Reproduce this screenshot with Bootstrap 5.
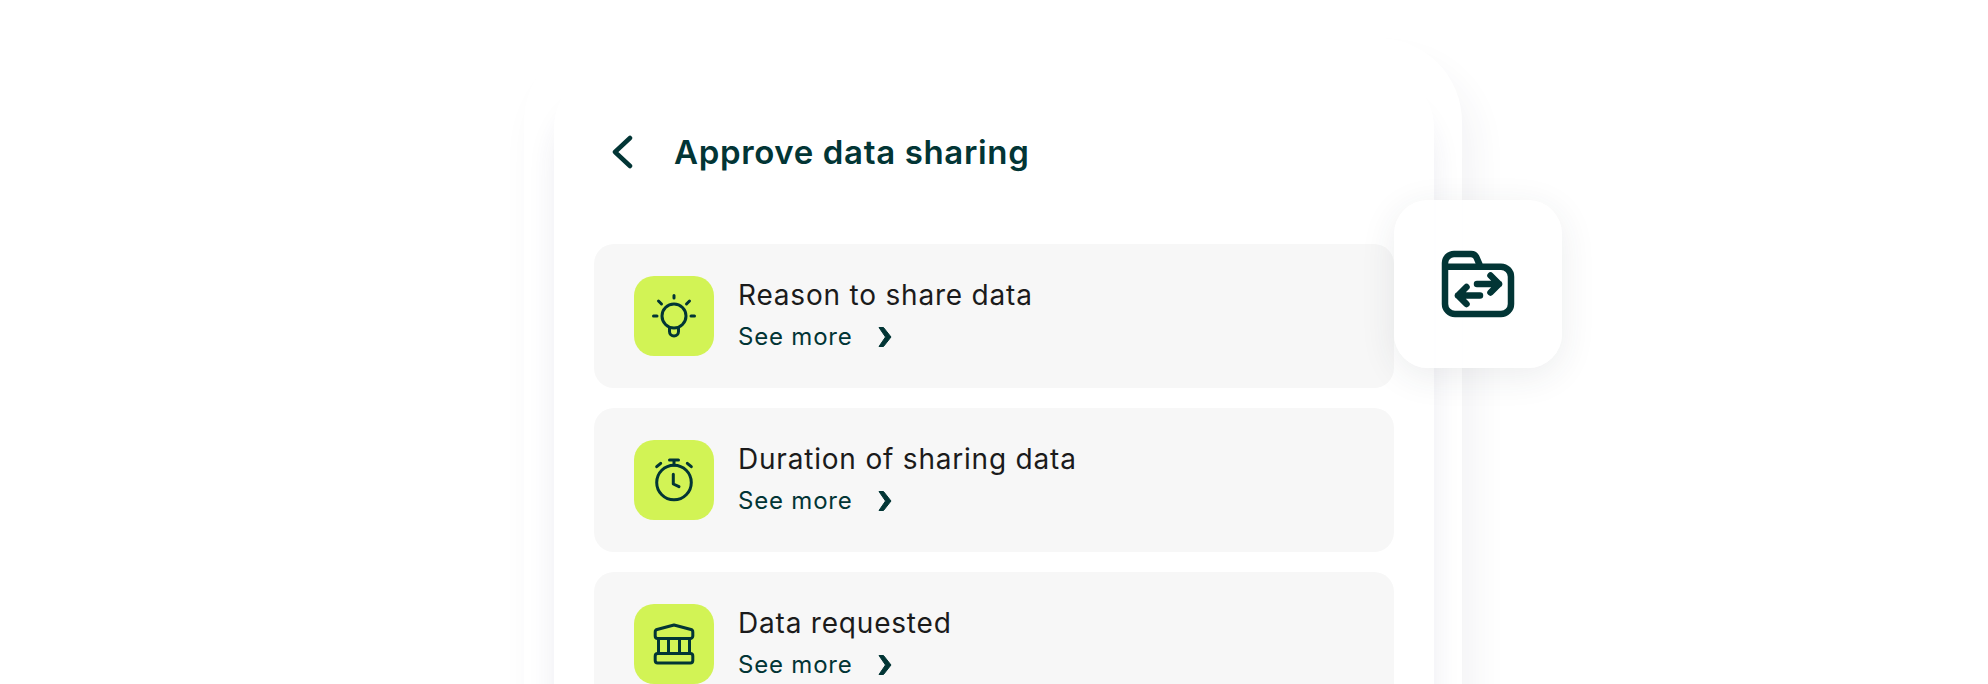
<!DOCTYPE html>
<html lang="en">
<head>
    <meta charset="UTF-8">
    <meta name="viewport" content="width=device-width, initial-scale=1.0">
    <title>Approve data sharing</title>
    <link rel="stylesheet" href="https://cdn.jsdelivr.net/npm/bootstrap@5.3.0/dist/css/bootstrap.min.css">
    <style>
        html, body {
            height: 684px;
            overflow: hidden;
            background: #fff;
        }
        body {
            font-family: Inter, "Noto Sans", sans-serif;
            color: #023535;
        }
        .stage {
            height: 684px;
            overflow: hidden;
            padding: 38px 0 0 524px;
        }
        .phone-ring {
            position: relative;
            width: 938px;
            height: 760px;
            padding: 28px 28px 0 30px;
            background: #fff;
            border-radius: 84px 84px 0 0;
            box-shadow: 12px 26px 36px rgba(50, 50, 90, 0.06);
        }
        .phone-screen {
            height: 100%;
            padding: 0 40px;
            background: #fff;
            border-radius: 62px 62px 0 0;
            box-shadow: 0 34px 28px rgba(50, 50, 100, 0.085);
        }
        .screen-head {
            height: 178px;
            padding: 0 0 6px 18px;
            gap: 40px;
        }
        .screen-head h1 {
            font-size: 33px;
            font-weight: 600;
            letter-spacing: 0.65px;
            margin: 0;
            padding-top: 1px;
            color: #023535;
        }
        .share-row {
            height: 144px;
            padding: 0 40px;
            gap: 24px;
            background: #f7f7f7;
            border-radius: 20px;
        }
        .row-stack {
            gap: 20px;
        }
        .row-text {
            padding-bottom: 2px;
        }
        .tile-lime {
            width: 80px;
            height: 80px;
            flex: none;
            background: #d2f355;
            border-radius: 20px;
        }
        .row-title {
            font-size: 28px;
            line-height: 38px;
            font-weight: 400;
            letter-spacing: 0.8px;
            color: #1b1b1b;
        }
        .row-more {
            font-size: 24px;
            line-height: 34px;
            letter-spacing: 0.8px;
            color: #023535;
            gap: 24px;
            margin-top: 6px;
        }
        .float-tile {
            position: absolute;
            left: 870px;
            top: 162px;
            width: 168px;
            height: 168px;
            background: rgba(255, 255, 255, 0.9);
            border-radius: 34px;
            box-shadow: 0 8px 36px rgba(40, 50, 70, 0.09);
        }
        .ico {
            fill: none;
            stroke: #023535;
            stroke-linecap: round;
            stroke-linejoin: round;
        }
    </style>
</head>
<body>
<div class="stage">
    <div class="phone-ring">
        <div class="phone-screen">
            <div class="screen-head d-flex align-items-center">
                <svg class="ico" width="22" height="38" viewBox="0 0 22 38" stroke-width="4.5"><path d="M18 5 3 19l15 14"/></svg>
                <h1>Approve data sharing</h1>
            </div>
            <div class="row-stack d-flex flex-column">
                <div class="share-row d-flex align-items-center">
                    <div class="tile-lime">
                        <svg class="ico" width="80" height="80" viewBox="0 0 80 80" stroke-width="3">
                            <circle cx="40" cy="40" r="12"/>
                            <path d="M35.500 52v3.500a4.500 4.500 0 0 0 9 0V52"/>
                            <path d="M40 19.500V22M19.500 40H23M57 40h3.500M24.500 25l3 3M55.500 25l-3 3"/>
                        </svg>
                    </div>
                    <div class="row-text">
                        <div class="row-title">Reason to share data</div>
                        <div class="row-more d-flex align-items-center">See more
                            <svg width="16" height="22" viewBox="0 0 16 22" fill="#023535" stroke="#023535" stroke-linejoin="round"><path d="M2 1.500h4.500L14 11l-7.500 9.500H2l6.500-9.500z"/></svg>
                        </div>
                    </div>
                </div>
                <div class="share-row d-flex align-items-center">
                    <div class="tile-lime">
                        <svg class="ico" width="80" height="80" viewBox="0 0 80 80" stroke-width="3">
                            <circle cx="40" cy="42.500" r="17.300"/>
                            <path d="M35.500 20h9M40 20v5M22.700 26.700l4-3.400M57.300 26.700l-4-3.400M39.300 34.300V44l5.700 2.700"/>
                        </svg>
                    </div>
                    <div class="row-text">
                        <div class="row-title">Duration of sharing data</div>
                        <div class="row-more d-flex align-items-center">See more
                            <svg width="16" height="22" viewBox="0 0 16 22" fill="#023535" stroke="#023535" stroke-linejoin="round"><path d="M2 1.500h4.500L14 11l-7.500 9.500H2l6.500-9.500z"/></svg>
                        </div>
                    </div>
                </div>
                <div class="share-row d-flex align-items-center">
                    <div class="tile-lime">
                        <svg class="ico" width="80" height="80" viewBox="0 0 80 80" stroke-width="3">
                            <path d="M40 21 23 25.500a2.500 2.500 0 0 0-1.800 2.400V32a2.500 2.500 0 0 0 2.500 2.500h32.600a2.500 2.500 0 0 0 2.500-2.500v-4.100a2.500 2.500 0 0 0-1.800-2.400z"/>
                            <path d="M24.500 34.500v15M34.500 34.500v15M45.500 34.500v15M55.500 34.500v15"/>
                            <rect x="21.200" y="49.500" width="37.600" height="9.500" rx="2.500"/>
                        </svg>
                    </div>
                    <div class="row-text">
                        <div class="row-title">Data requested</div>
                        <div class="row-more d-flex align-items-center">See more
                            <svg width="16" height="22" viewBox="0 0 16 22" fill="#023535" stroke="#023535" stroke-linejoin="round"><path d="M2 1.500h4.500L14 11l-7.500 9.500H2l6.500-9.500z"/></svg>
                        </div>
                    </div>
                </div>
            </div>
        </div>
        <div class="float-tile d-flex align-items-center justify-content-center">
            <svg class="ico" width="84" height="84" viewBox="0 0 84 84" stroke-width="6.500">
                <path d="M9 24.700V62a10 10 0 0 0 10 10h46a10 10 0 0 0 10-10V34.700a10 10 0 0 0-10-10H9V21a9 9 0 0 1 9-9h17a6 6 0 0 1 5.500 3.500l4 9.200"/>
                <path d="M41 42h22M54.500 33.500 63 42l-8.500 8.500"/>
                <path d="M44 53.500H22M30.500 45 22 53.500l8.500 8.500"/>
            </svg>
        </div>
    </div>
</div>
<script src="https://cdn.jsdelivr.net/npm/bootstrap@5.3.0/dist/js/bootstrap.bundle.min.js"></script>
</body>
</html>
